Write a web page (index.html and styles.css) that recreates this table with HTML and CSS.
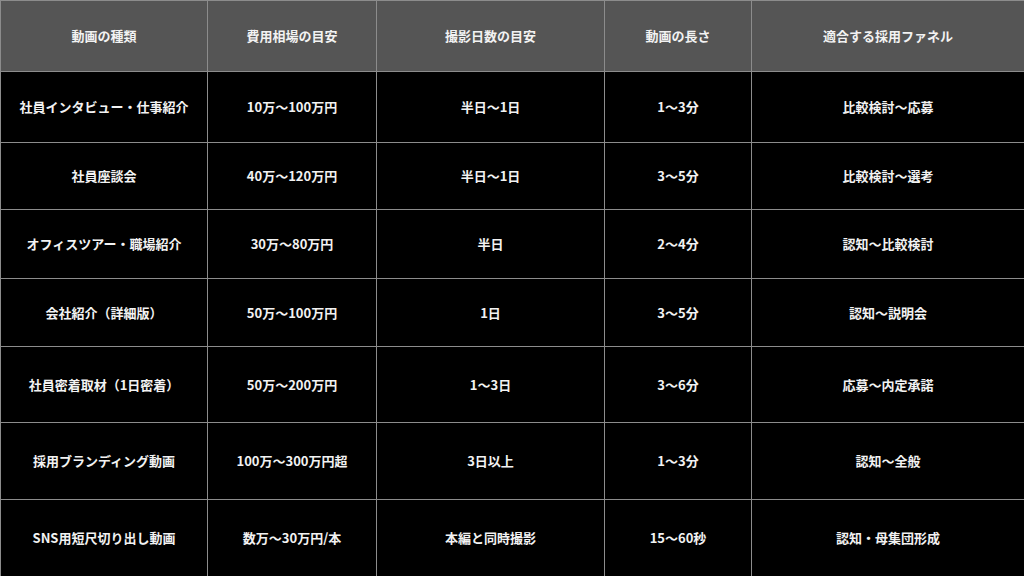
FILE: index.html
```html
<!DOCTYPE html>
<html lang="ja">
<head>
<meta charset="utf-8">
<link rel="stylesheet" href="styles.css">
</head>
<body>
<table class="grid">
  <colgroup>
    <col class="c1"><col class="c2"><col class="c3"><col class="c4"><col class="c5">
  </colgroup>
  <thead>
    <tr class="head">
      <th>動画の種類</th><th>費用相場の目安</th><th>撮影日数の目安</th><th>動画の長さ</th><th>適合する採用ファネル</th>
    </tr>
  </thead>
  <tbody>
    <tr class="r1"><td>社員インタビュー・仕事紹介</td><td>10万～100万円</td><td>半日～1日</td><td>1～3分</td><td>比較検討～応募</td></tr>
    <tr class="r2"><td>社員座談会</td><td>40万～120万円</td><td>半日～1日</td><td>3～5分</td><td>比較検討～選考</td></tr>
    <tr class="r3"><td>オフィスツアー・職場紹介</td><td>30万～80万円</td><td>半日</td><td>2～4分</td><td>認知～比較検討</td></tr>
    <tr class="r4"><td>会社紹介（詳細版）</td><td>50万～100万円</td><td>1日</td><td>3～5分</td><td>認知～説明会</td></tr>
    <tr class="r5"><td>社員密着取材（1日密着）</td><td>50万～200万円</td><td>1～3日</td><td>3～6分</td><td>応募～内定承諾</td></tr>
    <tr class="r6"><td>採用ブランディング動画</td><td>100万～300万円超</td><td>3日以上</td><td>1～3分</td><td>認知～全般</td></tr>
    <tr class="r7"><td>SNS用短尺切り出し動画</td><td>数万～30万円/本</td><td>本編と同時撮影</td><td>15～60秒</td><td>認知・母集団形成</td></tr>
  </tbody>
</table>
</body>
</html>
```
FILE: styles.css
```css
html, body {
  margin: 0;
  padding: 0;
  background: #000;
}
body {
  width: 1024px;
  height: 576px;
  overflow: hidden;
  font-family: "Noto Sans CJK JP", "Noto Sans", sans-serif;
}
.grid {
  width: 1024px;
  height: 576px;
  border-collapse: collapse;
  table-layout: fixed;
  color: #f2f2f2;
}
.c1 { width: 207px; }
.c2 { width: 169px; }
.c3 { width: 228px; }
.c4 { width: 147px; }
.c5 { width: 273px; }
.grid th, .grid td {
  border: 1px solid #8c8c8c;
  text-align: center;
  vertical-align: middle;
  padding: 0;
  font-size: 13px;
  font-weight: 700;
  line-height: 18px;
  white-space: nowrap;
}
.head th { background: #555; }
.grid td { background: #000; }
.head { height: 71px; }
.r1 { height: 71px; }
.r2 { height: 67px; }
.r3 { height: 69px; }
.r4 { height: 68px; }
.r5 { height: 76px; }
.r6 { height: 77px; }
.r7 { height: 77px; }
```
